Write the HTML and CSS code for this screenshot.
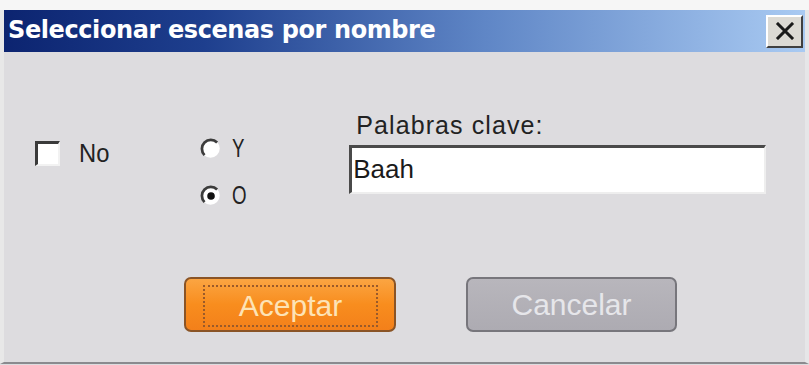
FILE: index.html
```html
<!DOCTYPE html>
<html lang="es">
<head>
<meta charset="utf-8">
<title>Seleccionar escenas por nombre</title>
<link rel="stylesheet" href="styles.css">
</head>
<body>
<div class="top-strip"></div>
<div class="window">
  <div class="titlebar">
    <span class="title">Seleccionar escenas por nombre</span>
    <span class="close-btn">
      <svg width="20" height="18" viewBox="0 0 20 18"><path d="M3 2 L17 16 M17 2 L3 16" stroke="#1a1a1a" stroke-width="3" stroke-linecap="square"/></svg>
    </span>
  </div>
  <div class="content">
    <div class="main-row">
      <label class="check-group">
        <span class="checkbox"></span>
        <span class="check-label">No</span>
      </label>
      <div class="radio-group">
        <div class="radio-row">
          <svg class="radio" width="21" height="21" viewBox="0 0 20 20">
            <circle cx="10" cy="10" r="8.8" fill="#ffffff"/>
            <path d="M4.3 16.3 A8.2 8.2 0 0 1 16.3 4.3" fill="none" stroke="#3c3c3c" stroke-width="2.6"/>
          </svg>
          <span class="radio-label">Y</span>
        </div>
        <div class="radio-row">
          <svg class="radio" width="21" height="21" viewBox="0 0 20 20">
            <circle cx="10" cy="10" r="8.8" fill="#ffffff"/>
            <path d="M4.3 16.3 A8.2 8.2 0 0 1 16.3 4.3" fill="none" stroke="#3c3c3c" stroke-width="2.6"/>
            <circle cx="10.5" cy="10.5" r="3.6" fill="#111111"/>
          </svg>
          <span class="radio-label">O</span>
        </div>
      </div>
      <div class="keyword-group">
        <div class="keyword-label">Palabras clave:</div>
        <div class="keyword-input">Baah</div>
      </div>
    </div>
    <div class="button-row">
      <button class="btn btn-accept"><span class="focus-ring">Aceptar</span></button>
      <button class="btn btn-cancel">Cancelar</button>
    </div>
  </div>
</div>
</body>
</html>
```

FILE: styles.css
```css
html, body {
  margin: 0;
  padding: 0;
  width: 809px;
  height: 365px;
  overflow: hidden;
  background: #dddcdf;
  font-family: "Liberation Sans", Arial, sans-serif;
}

.top-strip {
  height: 10px;
  background: #f6f6f6;
}

.window {
  height: 354px;
  box-sizing: border-box;
  border-left: 4px solid #e8e8e8;
  border-right: 4px solid #e6e6e8;
  border-bottom: 2px solid #8a8a8e;
  display: flex;
  flex-direction: column;
}

.titlebar {
  height: 42px;
  flex: none;
  display: flex;
  align-items: center;
  justify-content: space-between;
  background: linear-gradient(to right, #0c2470 0%, #1e3f8e 25%, #5f86c6 60%, #a9caf2 100%);
  padding: 0 2px 0 4px;
}

.title {
  color: #ffffff;
  font-family: "DejaVu Sans", "Liberation Sans", sans-serif;
  font-weight: bold;
  font-size: 24px;
  letter-spacing: -0.4px;
  padding-bottom: 2px;
}

.close-btn {
  width: 37px;
  height: 33px;
  box-sizing: border-box;
  background: #dcdad4;
  border-top: 2px solid #ffffff;
  border-left: 2px solid #ffffff;
  border-right: 2px solid #404040;
  border-bottom: 2px solid #404040;
  display: flex;
  align-items: center;
  justify-content: center;
}

.content {
  flex: 1;
  display: flex;
  flex-direction: column;
  background: #dddcdf;
}

.main-row {
  display: flex;
  align-items: flex-start;
  padding-top: 58px;
}

.check-group {
  display: flex;
  align-items: center;
  margin-left: 31px;
  margin-top: 29px;
}

.checkbox {
  width: 25px;
  height: 25px;
  flex: none;
  box-sizing: border-box;
  background: #ffffff;
  border-top: 3px solid #3a3a3a;
  border-left: 3px solid #3a3a3a;
  border-right: 2px solid #f2f2f2;
  border-bottom: 2px solid #f2f2f2;
}

.check-label {
  margin-left: 19px;
  font-size: 25px;
  line-height: 28px;
  color: #222222;
  transform: scaleX(0.95);
  transform-origin: left center;
}

.radio-group {
  display: flex;
  flex-direction: column;
  gap: 25px;
  margin-left: 89px;
  margin-top: 27px;
}

.radio-row {
  display: flex;
  align-items: center;
  height: 22px;
}

.radio {
  flex: none;
}

.radio-label {
  margin-left: 11px;
  font-size: 26px;
  color: #222222;
  transform: scaleX(0.72);
  transform-origin: left center;
}

.keyword-group {
  display: flex;
  flex-direction: column;
  margin-left: 97px;
}

.keyword-label {
  margin-left: 7px;
  font-size: 25px;
  color: #222222;
  line-height: 30px;
  letter-spacing: 1.1px;
}

.keyword-input {
  margin-top: 5px;
  width: 417px;
  height: 49px;
  box-sizing: border-box;
  background: #ffffff;
  border-top: 3px solid #4a4a4a;
  border-left: 3px solid #4a4a4a;
  border-right: 2px solid #eeeeee;
  border-bottom: 2px solid #eeeeee;
  padding: 6px 0 0 1px;
  font-size: 26px;
  color: #1a1a1a;
  line-height: 30px;
}

.button-row {
  display: flex;
  margin-top: 71px;
  padding-left: 180px;
  gap: 70px;
}

.btn {
  height: 55px;
  box-sizing: border-box;
  border-radius: 7px;
  font-family: "Liberation Sans", Arial, sans-serif;
  font-size: 30px;
  padding: 0;
  display: flex;
  align-items: center;
  justify-content: center;
}

.btn-accept {
  width: 212px;
  background: linear-gradient(to bottom, #fba542 0%, #f88d1e 50%, #f3801a 100%);
  border: 2px solid #8a5426;
  color: #fde3b6;
  padding: 6px 16px 3px 17px;
}

.focus-ring {
  flex: 1;
  align-self: stretch;
  display: flex;
  align-items: center;
  justify-content: center;
  border: 2px dotted #9a5a2a;
}

.btn-cancel {
  width: 211px;
  background: linear-gradient(to bottom, #b8b6bc 0%, #adabb2 100%);
  border: 2px solid #77767c;
  color: #e6e6ea;
}
```
